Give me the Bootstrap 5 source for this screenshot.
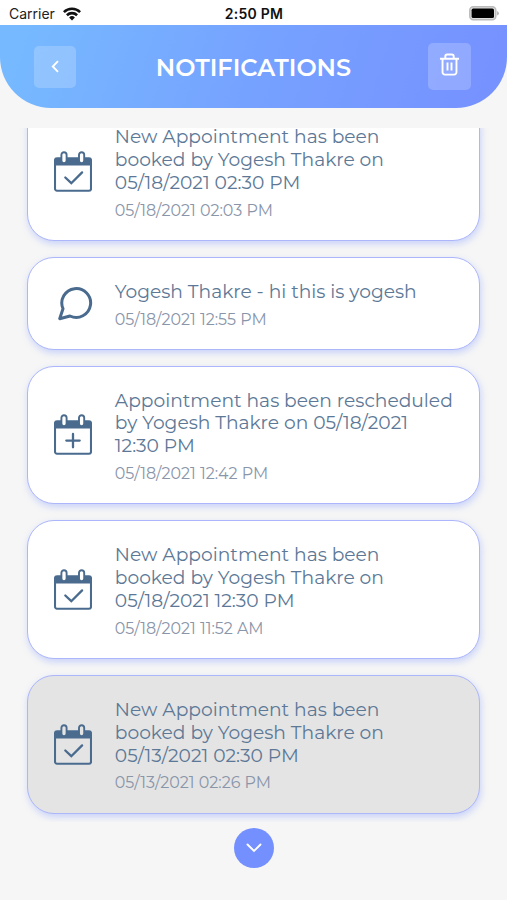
<!DOCTYPE html>
<html lang="en">
<head>
<meta charset="utf-8">
<meta name="viewport" content="width=device-width, initial-scale=1">
<title>Notifications</title>
<link href="https://cdn.jsdelivr.net/npm/bootstrap@5.3.0/dist/css/bootstrap.min.css" rel="stylesheet">
<style>
body{background:#f6f6f6;font-family:Montserrat,"Open Sans",sans-serif;height:900px;overflow:hidden}
.status{height:25px;font:14px Inter,"Liberation Sans",sans-serif;color:#222;background:#fff;padding:2px 8px 0 9px}
.status>*{flex:1 1 0}
.status b{font-size:14px;font-weight:600;letter-spacing:.25px;color:#111}
.hero{height:83px;background:linear-gradient(108deg,#76b9ff 5%,#76a2ff 50%,#7692ff 95%);border-radius:0 0 51px 51px;padding:0 36px 0 34px}
.hero h1{font-size:24px;font-weight:600;white-space:nowrap;padding:3px 0 0 3px}
.sq{background:rgba(255,255,255,.2);border:0;border-radius:5px;width:42px;height:42px}
.sq.trash{width:43px;height:47px}
.feed{margin-top:20px;height:694px;padding:0 27px}
.note{--pane:#fff;background:var(--pane);border:1.3px solid #acb6fb;border-radius:27px;box-shadow:1px 3px 7px rgba(110,140,255,.34);margin-bottom:16.2px;padding:22.9px 0 0 26px;height:138.5px;color:#5c7896}
.note.first{margin-top:-25.7px}
.note.brief{height:92.6px}
.note.seen{--pane:#e4e4e4}
.pic{width:39px;margin-right:21.8px;color:#4a6b8e;height:93px;padding-bottom:3px}
.brief .pic{height:46px;padding-bottom:2px}
.ln{font-size:18.67px;line-height:22.8px;white-space:nowrap}
.when{font-size:15.93px;line-height:19px;margin-top:6px;color:#8995a9;white-space:nowrap}
.more{width:40px;height:40px;background:#7490ff;border:0;margin-top:6px}
</style>
</head>
<body>
<svg class="d-none">
<symbol id="cal" viewBox="0 0 38 41"><rect x="1" y="7.3" width="36" height="32.4" rx="2" fill="none" stroke="currentColor" stroke-width="2.1"/><path d="M1.5 7h35v7.6h-35z" fill="currentColor"/><g fill="var(--pane)" stroke="currentColor" stroke-width="1.9"><rect x="7.4" y="1.2" width="5.2" height="11" rx="2.6"/><rect x="25" y="1.2" width="5.2" height="11" rx="2.6"/></g></symbol>
<symbol id="cal-check" viewBox="0 0 38 41"><use href="#cal"/><path d="M11.3 26.5l6 5.7 10.8-10.8" fill="none" stroke="currentColor" stroke-width="2.3" stroke-linecap="round"/></symbol>
<symbol id="cal-plus" viewBox="0 0 38 41"><use href="#cal"/><path d="M12.3 26.6h13.4M19 19.9v13.4" fill="none" stroke="currentColor" stroke-width="2.3" stroke-linecap="round"/></symbol>
</svg>
<div class="status d-flex align-items-center">
<div class="d-flex align-items-center"><span>Carrier</span><svg class="ms-2" width="18" height="14" viewBox="0 0 18 14"><g fill="none" stroke="#111" stroke-width="2.6"><path d="M.9 5.1a11.6 11.6 0 0 1 16.2 0M3.9 8.2a7.4 7.4 0 0 1 10.2 0"/></g><path d="M9 13.4l-2.9-3a4.2 4.2 0 0 1 5.8 0z" fill="#111"/></svg></div>
<b class="text-center">2:50 PM</b>
<div class="d-flex justify-content-end"><svg width="30" height="15" viewBox="0 0 30 15"><rect x=".8" y=".8" width="26" height="13" rx="3.5" fill="#ddd" stroke="#bbb" stroke-width="1.5"/><rect x="2.6" y="2.6" width="22.4" height="9.4" rx="1.6"/><path d="M28.2 5v4.6q1.6-.7 1.6-2.3t-1.6-2.3z" fill="#aaa"/></svg></div>
</div>
<header class="hero d-flex align-items-center justify-content-between text-white">
<button class="sq d-flex align-items-center justify-content-center p-0" aria-label="Back"><svg width="9" height="13" viewBox="0 0 9 13"><path d="M7 1.2L1.8 6.5 7 11.8" fill="none" stroke="#fff" stroke-width="1.9"/></svg></button>
<h1 class="m-0">NOTIFICATIONS</h1>
<button class="sq trash d-flex align-items-center justify-content-center p-0" aria-label="Delete all"><svg class="mb-1" width="21" height="23" viewBox="0 0 22 24" fill="none" stroke="#fff" stroke-width="2" stroke-linejoin="round"><path d="M1 6h20M3.7 6v14.2a2.4 2.4 0 0 0 2.4 2.4h9.8a2.4 2.4 0 0 0 2.4-2.4V6M6.6 5.8V3.6a2 2 0 0 1 2-2h4.8a2 2 0 0 1 2 2v2.2M8.9 10v8.2M13.1 10v8.2"/></svg></button>
</header>
<main class="feed overflow-hidden">
<article class="note first d-flex"><div class="pic d-flex align-items-center"><svg width="38" height="41"><use href="#cal-check"/></svg></div><div>
<div class="ln">New Appointment has been</div><div class="ln">booked by Yogesh Thakre on</div><div class="ln">05/18/2021 02:30 PM</div><div class="when">05/18/2021 02:03 PM</div></div></article>
<article class="note brief d-flex"><div class="pic d-flex align-items-center justify-content-end"><svg width="35" height="36" viewBox="0 0 35 36"><path d="M5 23.7A14.4 14.4 0 1 1 12 31L1.7 33.7z" fill="none" stroke="currentColor" stroke-width="3" stroke-linejoin="round"/></svg></div><div>
<div class="ln">Yogesh Thakre - hi this is yogesh</div><div class="when">05/18/2021 12:55 PM</div></div></article>
<article class="note d-flex"><div class="pic d-flex align-items-center"><svg width="38" height="41"><use href="#cal-plus"/></svg></div><div>
<div class="ln">Appointment has been rescheduled</div><div class="ln">by Yogesh Thakre on 05/18/2021</div><div class="ln">12:30 PM</div><div class="when">05/18/2021 12:42 PM</div></div></article>
<article class="note d-flex"><div class="pic d-flex align-items-center"><svg width="38" height="41"><use href="#cal-check"/></svg></div><div>
<div class="ln">New Appointment has been</div><div class="ln">booked by Yogesh Thakre on</div><div class="ln">05/18/2021 12:30 PM</div><div class="when">05/18/2021 11:52 AM</div></div></article>
<article class="note seen d-flex"><div class="pic d-flex align-items-center"><svg width="38" height="41"><use href="#cal-check"/></svg></div><div>
<div class="ln">New Appointment has been</div><div class="ln">booked by Yogesh Thakre on</div><div class="ln">05/13/2021 02:30 PM</div><div class="when">05/13/2021 02:26 PM</div></div></article>
</main>
<div class="d-flex justify-content-center"><button class="more rounded-circle d-flex align-items-center justify-content-center p-0" aria-label="Show more"><svg width="16" height="10" viewBox="0 0 16 10"><path d="M1.5 1.5L8 8l6.5-6.5" fill="none" stroke="#fff" stroke-width="1.9" stroke-linecap="round"/></svg></button></div>
<script src="https://cdn.jsdelivr.net/npm/bootstrap@5.3.0/dist/js/bootstrap.bundle.min.js"></script>
</body>
</html>
